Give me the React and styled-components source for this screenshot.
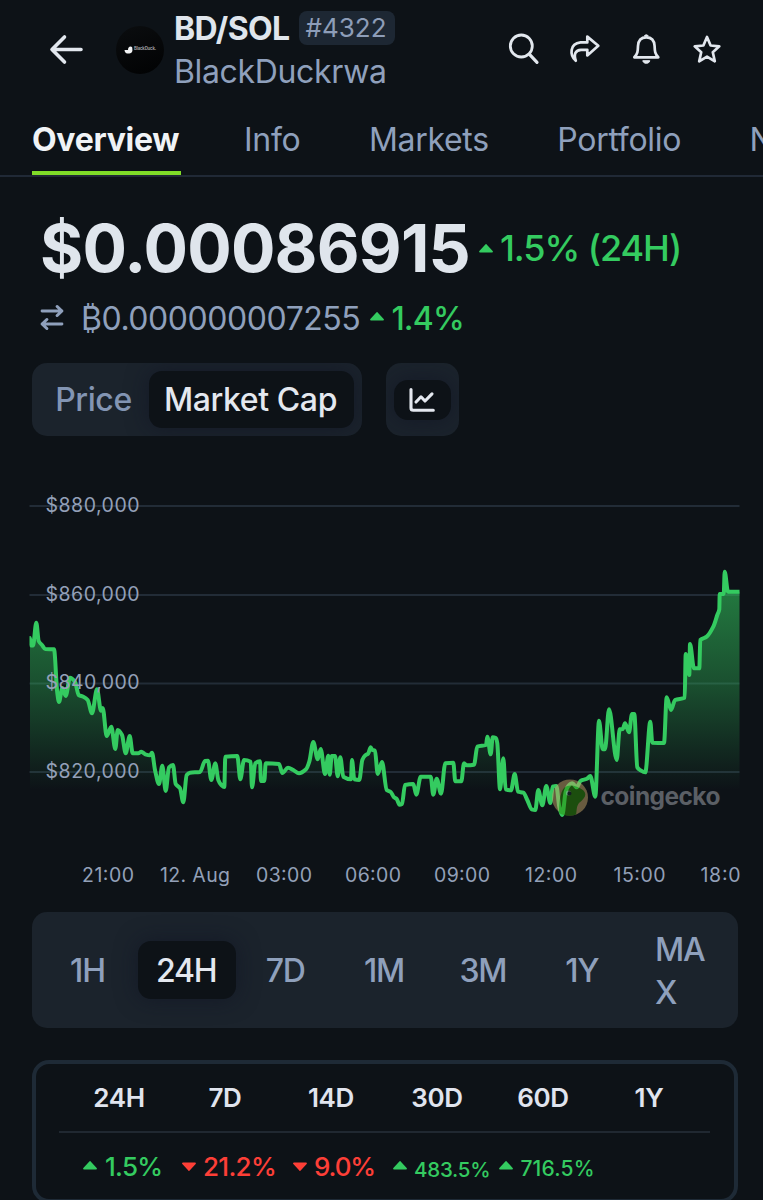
import { useState } from "react";
import styled, { createGlobalStyle } from "styled-components";

const GlobalStyle = createGlobalStyle`
    * {
        box-sizing: border-box;
    }
    body {
        margin: 0;
        background: #0d1217;
        font-family: Inter, "Liberation Sans", sans-serif;
        color: #dfe5ec;
    }
`;

const Screen = styled.div`
    width: 763px;
    height: 1200px;
    overflow: hidden;
    background: #0d1217;
`;

/* Header */

const Header = styled.header`
    display: flex;
    align-items: center;
    height: 99px;
    padding: 0 38px 0 48px;
`;

const BackButton = styled.button`
    display: flex;
    width: 36px;
    height: 32px;
    padding: 0;
    border: none;
    background: transparent;
    color: #e2e7ee;
`;

const Avatar = styled.div`
    display: flex;
    width: 48px;
    height: 48px;
    margin: 1px 10px 0 32px;
    border-radius: 50%;
    background: linear-gradient(160deg, #0a0c0e 10%, #020304 90%);
    align-items: center;
    justify-content: center;
`;

const AvatarText = styled.span`
    margin: 0 0 3px 1px;
    font-size: 4.3px;
    font-weight: 600;
    line-height: 6px;
    letter-spacing: -0.15px;
    color: #a9abae;
`;

const Titles = styled.div`
    flex: 1;
`;

const TitleLine = styled.div`
    display: flex;
    align-items: center;
    height: 43px;
    white-space: nowrap;
`;

const Symbol = styled.h1`
    margin: 0;
    font-size: 32px;
    font-weight: 700;
    letter-spacing: -0.6px;
`;

const Rank = styled.span`
    width: 96px;
    height: 34px;
    margin-left: 9px;
    padding: 0 7px;
    border-radius: 8px;
    background: #1d2733;
    font-size: 26px;
    line-height: 34px;
    letter-spacing: 0;
    color: #8d9db8;
`;

const CoinName = styled.span`
    font-size: 32px;
    letter-spacing: -0.35px;
    color: #8fa0bc;
`;

const Actions = styled.div`
    display: flex;
    gap: 25px;
    margin-bottom: 2px;
    color: #e2e7ee;
`;

/* Tabs */

const Tabs = styled.nav`
    display: flex;
    gap: 68.5px;
    height: 78px;
    padding: 8px 0 0 32px;
    border-bottom: 2px solid #202936;
`;

const Tab = styled.a`
    flex: none;
    height: 68px;
    min-width: ${(props) => (props.$active ? "149px" : "0")};
    margin-right: ${(props) => (props.$active ? "-5.5px" : "0")};
    border-bottom: 4px solid ${(props) => (props.$active ? "#80dc28" : "transparent")};
    font-size: 32px;
    font-weight: ${(props) => (props.$active ? 700 : 400)};
    line-height: 66px;
    letter-spacing: -0.3px;
    color: ${(props) => (props.$active ? "#f0f3f6" : "#8fa0bc")};
`;

/* Price */

const PriceBlock = styled.section`
    padding: 31px 40px 0;
`;

const PriceLine = styled.div`
    display: flex;
    align-items: center;
    height: 80px;
`;

const Price = styled.span`
    font-size: 66px;
    font-weight: 700;
    line-height: 80px;
    letter-spacing: -0.8px;
`;

const BtcLine = styled.div`
    display: flex;
    align-items: center;
    height: 60px;
`;

const BtcPrice = styled.span`
    margin-left: 15px;
    font-size: 32px;
    letter-spacing: -0.45px;
    color: #8fa0bc;
`;

const Change = styled.span`
    display: flex;
    align-items: center;
    gap: ${(props) => props.$gap || 7}px;
    margin-left: ${(props) => props.$left || 0}px;
    padding-top: ${(props) => props.$drop || 0}px;
    font-size: ${(props) => props.$size || 26}px;
    font-weight: 500;
    letter-spacing: ${(props) => props.$spacing || 0}px;
    white-space: nowrap;
    color: ${(props) => (props.$down ? "#fd3f37" : "#34cb60")};
`;

const CaretIcon = styled.svg`
    flex: none;
    margin-bottom: ${(props) => props.$lift || 0}px;
`;

/* Chart controls */

const Controls = styled.div`
    display: flex;
    gap: 24px;
    padding: 15px 32px 0;
`;

const Switch = styled.div`
    display: flex;
    align-items: center;
    width: ${(props) => props.$width}px;
    height: 73px;
    padding: 0 8px;
    border-radius: 15px;
    background: #1b232c;
    overflow: hidden;
`;

const SwitchItem = styled.button`
    width: ${(props) => props.$width}px;
    height: 57px;
    padding: 0 2px 0 0;
    border: none;
    border-radius: 13px;
    background: ${(props) => (props.$active ? "#0d1217" : "transparent")};
    box-shadow: ${(props) => (props.$active ? "0 0 22px rgba(15, 18, 35, 0.6)" : "none")};
    font-family: inherit;
    font-size: 32px;
    font-weight: 500;
    letter-spacing: -0.4px;
    white-space: nowrap;
    color: ${(props) => (props.$active ? "#e4e8ef" : "#8395b3")};
`;

const ChartKind = styled(SwitchItem)`
    display: flex;
    align-items: center;
    justify-content: center;
    height: 40px;
    border-radius: 14px;
`;

const ChartArea = styled.div`
    height: 476px;
    padding-top: 34px;

    svg {
        display: block;
    }
`;

/* Ranges */

const Ranges = styled.div`
    display: flex;
    align-items: center;
    width: 706px;
    height: 116px;
    margin-left: 32px;
    padding: 0 7px;
    border-radius: 15px;
    background: #1b232c;
`;

const RangeCell = styled.div`
    flex: 1;
    display: flex;
    justify-content: center;
`;

const Range = styled.button`
    width: ${(props) => (props.$wrap ? 53 : 98)}px;
    min-height: 58px;
    padding: ${(props) => (props.$wrap ? "1px 0 0" : "0 2px 0 0")};
    border: none;
    border-radius: 13px;
    background: ${(props) => (props.$active ? "#0d1217" : "transparent")};
    box-shadow: ${(props) => (props.$active ? "0 0 22px rgba(15, 18, 35, 0.6)" : "none")};
    font-family: inherit;
    font-size: 32px;
    font-weight: 500;
    line-height: 43px;
    letter-spacing: -1.2px;
    text-align: ${(props) => (props.$wrap ? "left" : "center")};
    word-break: break-all;
    color: ${(props) => (props.$active ? "#e4e8ef" : "#8fa0bc")};
`;

/* Performance table */

const Performance = styled.section`
    width: 706px;
    height: 143px;
    margin: 32px 0 0 32px;
    padding: 0 24px 0 23px;
    border: 4px solid #1e2a36;
    border-radius: 17px;
`;

const PerformanceHead = styled.div`
    display: flex;
    height: 69px;
    padding: 0 8px 0 7px;
    border-bottom: 2px solid #202831;
`;

const HeadCell = styled.div`
    flex: 1;
    font-size: 26px;
    font-weight: 600;
    line-height: 67px;
    letter-spacing: -0.3px;
    text-align: center;
    color: #e0e4ee;
`;

const PerformanceRow = styled.div`
    display: flex;
    height: 67px;
    padding-left: 24px;
`;

const ARROW_UP = "M7 1 L13 7.6 H1 Z";
const ARROW_DOWN = "M7 8 L1 1.4 H13 Z";

const Caret = ({ down, lift }) => (
    <CaretIcon $lift={lift} width="14" height="9" viewBox="0 0 14 9" fill="currentColor" stroke="currentColor" strokeWidth="1.8" strokeLinejoin="round">
        <path d={down ? ARROW_DOWN : ARROW_UP} />
    </CaretIcon>
);

const BackIcon = () => (
    <svg width="36" height="32" viewBox="0 0 36 32" fill="none" stroke="currentColor" strokeWidth="3.6" strokeLinecap="round" strokeLinejoin="round">
        <path d="M16.5 3 L4 15.5 L16.5 28 M4 15.5 H33" />
    </svg>
);

const SearchIcon = () => (
    <svg width="36" height="36" viewBox="-1.5 -0.5 36 36" fill="none" stroke="currentColor" strokeWidth="2.8" strokeLinecap="round">
        <circle cx="13.8" cy="14.5" r="11" />
        <path d="M22 22.8 L29.5 30.8" strokeWidth="3.2" />
    </svg>
);

const ShareIcon = () => (
    <svg width="36" height="36" viewBox="0 0 36 36" fill="none" stroke="currentColor" strokeWidth="2.7" strokeLinejoin="round">
        <path d="M20.3 5.6 L31.3 14.8 L20.3 24.4 V18.8 H14 C8.5 19 6.5 23 8.8 29.8 C2.5 24.5 2.5 12.5 13.5 11.4 H20.3 Z" />
    </svg>
);

const BellIcon = () => (
    <svg width="36" height="36" viewBox="-0.3 -0.5 36 36" fill="none" stroke="currentColor" strokeWidth="2.7" strokeLinejoin="round">
        <path d="M6 25.8 C9.5 22.5 9.5 19.5 9.7 14.5 C10 8.5 13.5 5.8 18 5.8 C22.5 5.8 26 8.5 26.3 14.5 C26.5 19.5 26.5 22.5 30 25.8 Z" />
        <path d="M16 4.6 A2.2 2.2 0 0 1 20 4.6 Z" fill="currentColor" strokeWidth="1" />
        <path d="M14.5 29.2 H21.5 C21 32.7 15 32.7 14.5 29.2 Z" fill="currentColor" strokeWidth="1" />
    </svg>
);

const StarIcon = () => (
    <svg width="36" height="36" viewBox="0 -0.5 36 36" fill="none" stroke="currentColor" strokeWidth="2.7" strokeLinejoin="round">
        <path d="M18 5.4 L21.6 14 L30.3 14.8 L23.8 20.7 L25.8 29.8 L18 25.2 L10.2 29.8 L12.2 20.7 L5.7 14.8 L14.4 14 Z" />
    </svg>
);

const SwapIcon = () => (
    <svg width="26" height="28" viewBox="0 1 26 28" fill="none" stroke="#8fa0bc" strokeWidth="2.8" strokeLinecap="round" strokeLinejoin="round">
        <path d="M2 8 H22 M17 3.4 L22 8 L17 12.6" />
        <path d="M22 21 H2 M7 16.4 L2 21 L7 25.6" />
    </svg>
);

const LineChartIcon = () => (
    <svg width="28" height="26" viewBox="0 0 28 26" fill="none" stroke="currentColor" strokeWidth="3.1" strokeLinecap="round" strokeLinejoin="round">
        <path d="M3 2.5 V21 Q3 23.3 5.3 23.3 H25.3" />
        <path d="M8 15 L13 9.8 L17 14 L24 6.8" />
    </svg>
);

const DuckIcon = () => (
    <svg width="9" height="8" viewBox="0 0 9 8" fill="#f2f3f4">
        <path d="M0.5 4 H4 C4 2 5 0.5 6.5 0.5 C8 0.5 8.6 1.7 8.3 3 C9 6 7 7.6 4.5 7.6 C2 7.6 0.6 6.5 0.5 4 Z" />
    </svg>
);

//market cap samples, [x, y] in chart units
const SERIES = [
    [30, 638], [31, 645.5], [33, 645.5], [36.3, 622.7], [38.7, 641], [42, 645], [45.3, 649], [54, 649.3], [57.3, 693], [59, 702],
    [62.3, 688], [65.7, 696], [70, 677.7], [75, 681.7], [78.7, 695], [83.3, 696.7], [87.7, 700], [92, 713.3], [97, 689.3], [101, 710.7],
    [102.7, 708], [106.7, 736], [111.3, 726.7], [115.3, 749], [117.7, 730], [122, 735], [125.7, 753.3], [129.7, 736], [132.7, 753.3], [138.3, 753.3],
    [141.3, 751.7], [145.3, 754.3], [150, 755.3], [152, 752.7], [155, 770], [159, 784], [162.3, 765.7], [165.7, 791], [169, 767.3], [173, 765],
    [175.7, 784], [180, 788.3], [183.3, 802.3], [186.7, 775], [190, 772.7], [200, 772], [205, 761], [208, 760.7], [211.3, 780], [215.3, 763.3],
    [218.3, 780], [221.3, 785], [224.3, 787], [225.3, 756.7], [237.3, 756], [240.3, 779.3], [244, 760], [250.7, 761.7], [252, 787.3], [255.3, 763.3],
    [260, 761.3], [261, 781], [264.3, 781], [265.7, 763.3], [279, 764], [282.3, 773], [288, 767.7], [293.3, 770], [299, 773.3], [306, 769.3],
    [309.3, 761.7], [313.3, 742], [317.7, 759.3], [320.7, 749], [325, 774], [328.3, 755.7], [329.7, 774.7], [331.7, 756], [335, 756], [337.7, 776.3],
    [340.3, 757.3], [343.3, 776.7], [351, 779.3], [352, 760], [354.3, 779.3], [359.3, 780], [362.3, 760], [365, 755.7], [368.3, 753.3], [370.7, 747.3],
    [372.3, 750], [375, 750.7], [377.7, 774], [382, 762], [386.7, 790], [390.7, 792], [394, 797.3], [396.7, 799], [399.5, 804.7], [402, 804],
    [405, 785], [413.3, 784], [416.3, 794.7], [420.7, 776.7], [430.7, 776.7], [433.3, 794.7], [436.7, 778.7], [441, 793.7], [445.3, 763.3], [453.3, 762.7],
    [455.3, 781.3], [461.3, 781.3], [464, 763.3], [466.7, 765.3], [474, 764.7], [477.3, 746.7], [486, 745], [487.3, 736.7], [490.7, 754.3], [492.7, 737.3],
    [496, 738], [497.3, 743.3], [500, 789.3], [503.3, 758.3], [505.7, 789.3], [511, 790.3], [514.7, 774], [518, 791.7], [523.3, 792.7], [527.3, 800],
    [531.7, 809.3], [535.3, 810], [538.3, 790], [542.3, 805.3], [546.3, 786], [550.3, 803], [552.7, 786.7], [556.3, 786], [559.3, 806.7], [562.3, 815],
    [565.7, 791.7], [568.3, 786], [572.3, 783.3], [576.7, 787.3], [580.7, 780.7], [587, 778.7], [590.3, 776], [595.3, 796.7], [599, 720.7], [602.7, 749.3],
    [605, 749.3], [609, 709.3], [616.7, 760], [619.7, 729.3], [622.7, 729], [625, 723.3], [629, 732.3], [632, 714], [634.3, 714], [637.3, 767.3],
    [640, 770], [645.3, 772.3], [650.3, 721.7], [652.3, 742.7], [664, 743], [666.7, 697.3], [671, 710], [675, 700], [684.7, 697.7], [685.7, 654],
    [689.3, 675], [690, 644], [694, 668.3], [699.3, 668.3], [700.3, 640], [706.7, 636.7], [713.3, 626.7], [717.3, 615], [719.3, 609.3], [719.7, 594],
    [723.7, 594], [724.7, 571.7], [728, 591.7], [740, 591.7],
];

const GRID = [
    { y: 506, label: "$880,000" },
    { y: 595, label: "$860,000" },
    { y: 683.5, label: "$840,000" },
    { y: 772, label: "$820,000" },
];

const HOURS = [
    { x: 82, width: 52, label: "21:00" },
    { x: 160, width: 70, label: "12. Aug" },
    { x: 256, width: 56, label: "03:00" },
    { x: 345, width: 56, label: "06:00" },
    { x: 434, width: 56, label: "09:00" },
    { x: 525, width: 52, label: "12:00" },
    { x: 613.5, width: 52, label: "15:00" },
    { x: 700.5, width: 40, label: "18:0" },
];

//monotone curve through all the points
const curve = (points) => {
    const slopes = points.slice(1).map((p, i) => (p[1] - points[i][1]) / (p[0] - points[i][0]));
    const tangents = points.map((p, i) => {
        const a = slopes[i - 1];
        const b = slopes[i];
        if (a === undefined || b === undefined || a * b <= 0) return 0;
        return (2 * a * b) / (a + b);
    });
    let d = `M${points[0][0]} ${points[0][1]}`;
    for (let i = 1; i < points.length; i++) {
        const [x0, y0] = points[i - 1];
        const [x1, y1] = points[i];
        const h = (x1 - x0) / 3;
        d += ` C${(x0 + h).toFixed(2)} ${(y0 + h * tangents[i - 1]).toFixed(2)} ${(x1 - h).toFixed(2)} ${(y1 - h * tangents[i]).toFixed(2)} ${x1} ${y1}`;
    }
    return d;
};

const MarketChart = () => {
    const line = curve(SERIES);

    return (
        <svg width="763" height="442" viewBox="0 470 763 442" fontFamily="Inter, sans-serif">
            <defs>
                <linearGradient id="area" gradientUnits="userSpaceOnUse" x1="0" y1="572" x2="0" y2="790">
                    <stop offset="0" stopColor="#34cb60" stopOpacity="0.6" />
                    <stop offset="0.5" stopColor="#34cb60" stopOpacity="0.34" />
                    <stop offset="1" stopColor="#34cb60" stopOpacity="0" />
                </linearGradient>
                <clipPath id="plot">
                    <rect x="29.5" y="470" width="710" height="380" />
                </clipPath>
            </defs>
            {GRID.map((row) => (
                <path key={row.y} d={`M29.5 ${row.y} H739.5`} stroke="#222c37" strokeWidth="2" />
            ))}
            <g clipPath="url(#plot)">
                <path d={`${line} V790 H30 Z`} fill="url(#area)" />
                <path d={line} fill="none" stroke="#34cb60" strokeWidth="4" strokeLinejoin="round" strokeLinecap="round" />
            </g>
            <g fill="#93a0b8" fontSize="19.5">
                {GRID.map((row) => (
                    <text key={row.y} x="45.5" y={Math.floor(row.y + 6)} textLength="94">{row.label}</text>
                ))}
                {HOURS.map((hour) => (
                    <text key={hour.label} x={hour.x} y="882" textLength={hour.width}>{hour.label}</text>
                ))}
            </g>
            <g opacity="0.5">
                <circle cx="570" cy="797.5" r="18" fill="#c2a468" />
                <path d="M559 813 C559 803 560 793 564 788 C569 783 577 786 583 790 C588 795 584 799 579 803 C576 807 577 811 576 814.5 C570 816.5 564 816 559 813 Z" fill="#2c8a06" />
                <circle cx="568.5" cy="793" r="2.6" fill="#8fa58c" />
                <circle cx="569.5" cy="793.5" r="2" fill="#1c2a2c" />
            </g>
            <text x="600.5" y="804.5" fontSize="24.5" fontWeight="700" textLength="120" fill="#5b5f65">coingecko</text>
        </svg>
    );
};

const TABS = ["Overview", "Info", "Markets", "Portfolio", "News"];
const RANGES = ["1H", "24H", "7D", "1M", "3M", "1Y", "MAX"];
const PERIODS = ["24H", "7D", "14D", "30D", "60D", "1Y"];

const App = () => {
    const [tab, setTab] = useState("Overview");
    const [mode, setMode] = useState("Market Cap");
    const [range, setRange] = useState("24H");

    return (
        <Screen>
            <GlobalStyle />
            <Header>
                <BackButton aria-label="Back"><BackIcon /></BackButton>
                <Avatar>
                    <DuckIcon />
                    <AvatarText>BlackDuck.</AvatarText>
                </Avatar>
                <Titles>
                    <TitleLine>
                        <Symbol>BD/SOL</Symbol>
                        <Rank>#4322</Rank>
                    </TitleLine>
                    <TitleLine>
                        <CoinName>BlackDuckrwa</CoinName>
                    </TitleLine>
                </Titles>
                <Actions>
                    <SearchIcon />
                    <ShareIcon />
                    <BellIcon />
                    <StarIcon />
                </Actions>
            </Header>

            <Tabs>
                {TABS.map((name) => (
                    <Tab key={name} $active={name === tab} onClick={() => setTab(name)}>{name}</Tab>
                ))}
            </Tabs>

            <PriceBlock>
                <PriceLine>
                    <Price>$0.00086915</Price>
                    <Change $left={9} $size={36} $spacing={-1.05}><Caret />1.5% (24H)</Change>
                </PriceLine>
                <BtcLine>
                    <SwapIcon />
                    <BtcPrice>₿0.000000007255</BtcPrice>
                    <Change $left={10} $size={32} $spacing={-0.8}><Caret lift={3} />1.4%</Change>
                </BtcLine>
            </PriceBlock>

            <Controls>
                <Switch $width={330}>
                    <SwitchItem $width={109} $active={mode === "Price"} onClick={() => setMode("Price")}>Price</SwitchItem>
                    <SwitchItem $width={205} $active={mode === "Market Cap"} onClick={() => setMode("Market Cap")}>Market Cap</SwitchItem>
                </Switch>
                <Switch $width={73}>
                    <ChartKind $width={57} $active><LineChartIcon /></ChartKind>
                </Switch>
            </Controls>

            <ChartArea>
                <MarketChart />
            </ChartArea>

            <Ranges>
                {RANGES.map((name) => (
                    <RangeCell key={name}>
                        <Range $active={name === range} $wrap={name === "MAX"} onClick={() => setRange(name)}>{name}</Range>
                    </RangeCell>
                ))}
            </Ranges>

            <Performance>
                <PerformanceHead>
                    {PERIODS.map((name) => (
                        <HeadCell key={name}>{name}</HeadCell>
                    ))}
                </PerformanceHead>
                <PerformanceRow>
                    <Change $gap={8} $spacing={-0.7}><Caret lift={2} />1.5%</Change>
                    <Change $down $left={19.5} $spacing={-0.7}><Caret down />21.2%</Change>
                    <Change $down $left={17} $spacing={-1.1}><Caret down />9.0%</Change>
                    <Change $left={18} $drop={5} $size={20.5} $spacing={-0.25}><Caret lift={8} />483.5%</Change>
                    <Change $left={9} $drop={4} $size={21} $spacing={0.2}><Caret lift={7} />716.5%</Change>
                </PerformanceRow>
            </Performance>
        </Screen>
    );
};

export default App;
